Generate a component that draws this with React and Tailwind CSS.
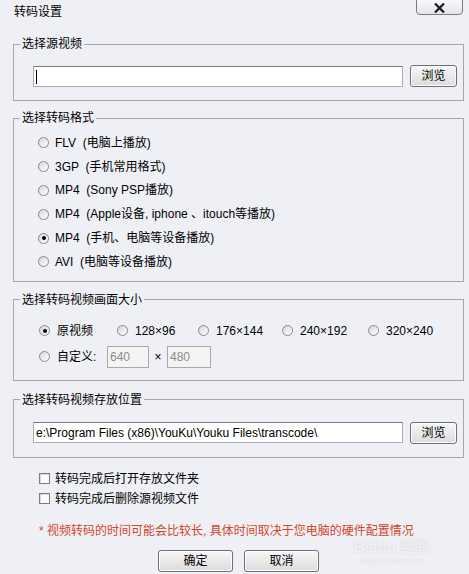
import { useState } from 'react'

const FONT = { fontFamily: '"Liberation Sans", "Noto Sans CJK SC", sans-serif' }

function Radio({ checked }) {
  return (
    <span className="w-[11px] h-[11px] shrink-0 rounded-full border border-[#8a8a8a] bg-gradient-to-br from-[#d6d6d6] to-white grid place-items-center">
      {checked && <span className="w-[4px] h-[4px] rounded-full bg-black" />}
    </span>
  )
}

function Check() {
  return <span className="w-[11px] h-[11px] shrink-0 border border-[#7d7d7d] bg-white shadow-[inset_1px_1px_0_#d8d8d8]" />
}

function Button({ children, className = '' }) {
  return (
    <button className={'h-[22px] rounded-[3px] border border-[#707070] bg-gradient-to-b from-[#f7f7f7] to-[#dcdcdc] text-[12px] leading-none text-black shadow-[inset_0_0_0_1px_#fcfcfc] ' + className}>
      {children}
    </button>
  )
}

function Group({ legend, className = '', children }) {
  return (
    <fieldset className={'ml-[13px] w-[451px] border border-[#a7a7a7] ' + className}>
      <legend className="ml-[6px] px-[2px] text-[12px] leading-[14px] text-black">{legend}</legend>
      {children}
    </fieldset>
  )
}

const FORMATS = [
  'FLV  (电脑上播放)',
  '3GP  (手机常用格式)',
  'MP4  (Sony PSP播放)',
  'MP4  (Apple设备, iphone 、itouch等播放)',
  'MP4  (手机、电脑等设备播放)',
  'AVI  (电脑等设备播放)',
]

const SIZES = [
  { label: '原视频', w: 'w-[78px]' },
  { label: '128×96', w: 'w-[81px]' },
  { label: '176×144', w: 'w-[84px]' },
  { label: '240×192', w: 'w-[86px]' },
  { label: '320×240', w: 'w-[80px]' },
]

export default function App() {
  const [format] = useState(4)
  const [size] = useState(0)

  return (
    <div style={FONT} className="relative w-[469px] h-[574px] overflow-hidden bg-[#eff0f5] text-[12px] text-black">
      {/* title bar */}
      <div className="h-[37px] pl-[14px] pt-[5px]">
        <div className="text-[12px] leading-[14px]">转码设置</div>
      </div>
      <div className="absolute left-[416px] top-[-3px] w-[47px] h-[18px] rounded-b-[4px] border border-[#7c7c7c] bg-gradient-to-b from-[#fafafa] to-[#e4e6ec] grid place-items-center">
        <svg width="11" height="10" viewBox="0 0 11 10" className="mt-[3px]">
          <path d="M1 0.5 L10 9.5 M10 0.5 L1 9.5" stroke="#1a1a1a" strokeWidth="2.2" />
        </svg>
      </div>

      {/* 选择源视频 */}
      <Group legend="选择源视频" className="pb-[13px]">
        <div className="mt-[14px] pl-[19px] flex items-center gap-[7px]">
          <div className="relative w-[370px] h-[21px] bg-white border border-[#abadb3] border-t-[#7a7a7a]">
            <span className="absolute left-[2px] top-[3px] w-px h-[14px] bg-black" />
          </div>
          <Button className="w-[47px]">浏览</Button>
        </div>
      </Group>

      {/* 选择转码格式 */}
      <Group legend="选择转码格式" className="mt-[10px] pb-[7px]">
        <div className="mt-[6px] pl-[24px] flex flex-col">
          {FORMATS.map((f, i) => (
            <div key={f} className="h-[23.8px] flex items-center gap-[6px]">
              <Radio checked={i === format} />
              <span className="leading-none whitespace-pre">{f}</span>
            </div>
          ))}
        </div>
      </Group>

      {/* 选择转码视频画面大小 */}
      <Group legend="选择转码视频画面大小" className="mt-[11px] pb-[12px]">
        <div className="mt-[13px] pl-[25px] flex flex-col gap-[4px]">
          <div className="h-[22px] flex items-center">
            {SIZES.map((s, i) => (
              <div key={s.label} className={'flex items-center gap-[7px] ' + s.w}>
                <Radio checked={i === size} />
                <span className="leading-none">{s.label}</span>
              </div>
            ))}
          </div>
          <div className="h-[22px] flex items-center">
            <Radio />
            <span className="ml-[7px] w-[50px] leading-none">自定义:</span>
            <div className="w-[42px] h-[22px] border border-[#a9a9a9] bg-[#f4f4f4] pl-[2px] flex items-center text-[#8c8c8c]">640</div>
            <span className="w-[18px] text-center leading-none">×</span>
            <div className="w-[44px] h-[22px] border border-[#a9a9a9] bg-[#f4f4f4] pl-[2px] flex items-center text-[#8c8c8c]">480</div>
          </div>
        </div>
      </Group>

      {/* 选择转码视频存放位置 */}
      <Group legend="选择转码视频存放位置" className="mt-[12px] pb-[13px]">
        <div className="mt-[15px] pl-[19px] flex items-center gap-[7px]">
          <div className="w-[370px] h-[21px] bg-white border border-[#abadb3] border-t-[#7a7a7a] pl-[2px] flex items-center whitespace-nowrap overflow-hidden">
            e:\Program Files (x86)\YouKu\Youku Files\transcode\
          </div>
          <Button className="w-[47px]">浏览</Button>
        </div>
      </Group>

      {/* options */}
      <div className="mt-[11px] pl-[39px] flex flex-col">
        <label className="h-[20px] flex items-center gap-[5px]">
          <Check />
          <span className="leading-none">转码完成后打开存放文件夹</span>
        </label>
        <label className="h-[20px] flex items-center gap-[5px]">
          <Check />
          <span className="leading-none">转码完成后删除源视频文件</span>
        </label>
      </div>

      <div className="mt-[14px] pl-[39px] h-[16px] flex items-center text-[#d2462a] leading-none whitespace-nowrap">
        * 视频转码的时间可能会比较长, 具体时间取决于您电脑的硬件配置情况
      </div>

      <div className="mt-[11px] pl-[158px] flex gap-[11px]">
        <Button className="w-[75px]">确定</Button>
        <Button className="w-[75px]">取消</Button>
      </div>

      {/* watermark */}
      <div className="absolute left-[354px] top-[539px] flex flex-col items-center text-white/60 pointer-events-none">
        <span className="text-[15px] font-bold leading-none [text-shadow:0_0_2px_#d0d0d0]">Baidu 经验</span>
        <span className="text-[8px] leading-none mt-[3px] [text-shadow:0_0_1px_#d0d0d0]">jingyan.baidu.com</span>
      </div>
    </div>
  )
}
